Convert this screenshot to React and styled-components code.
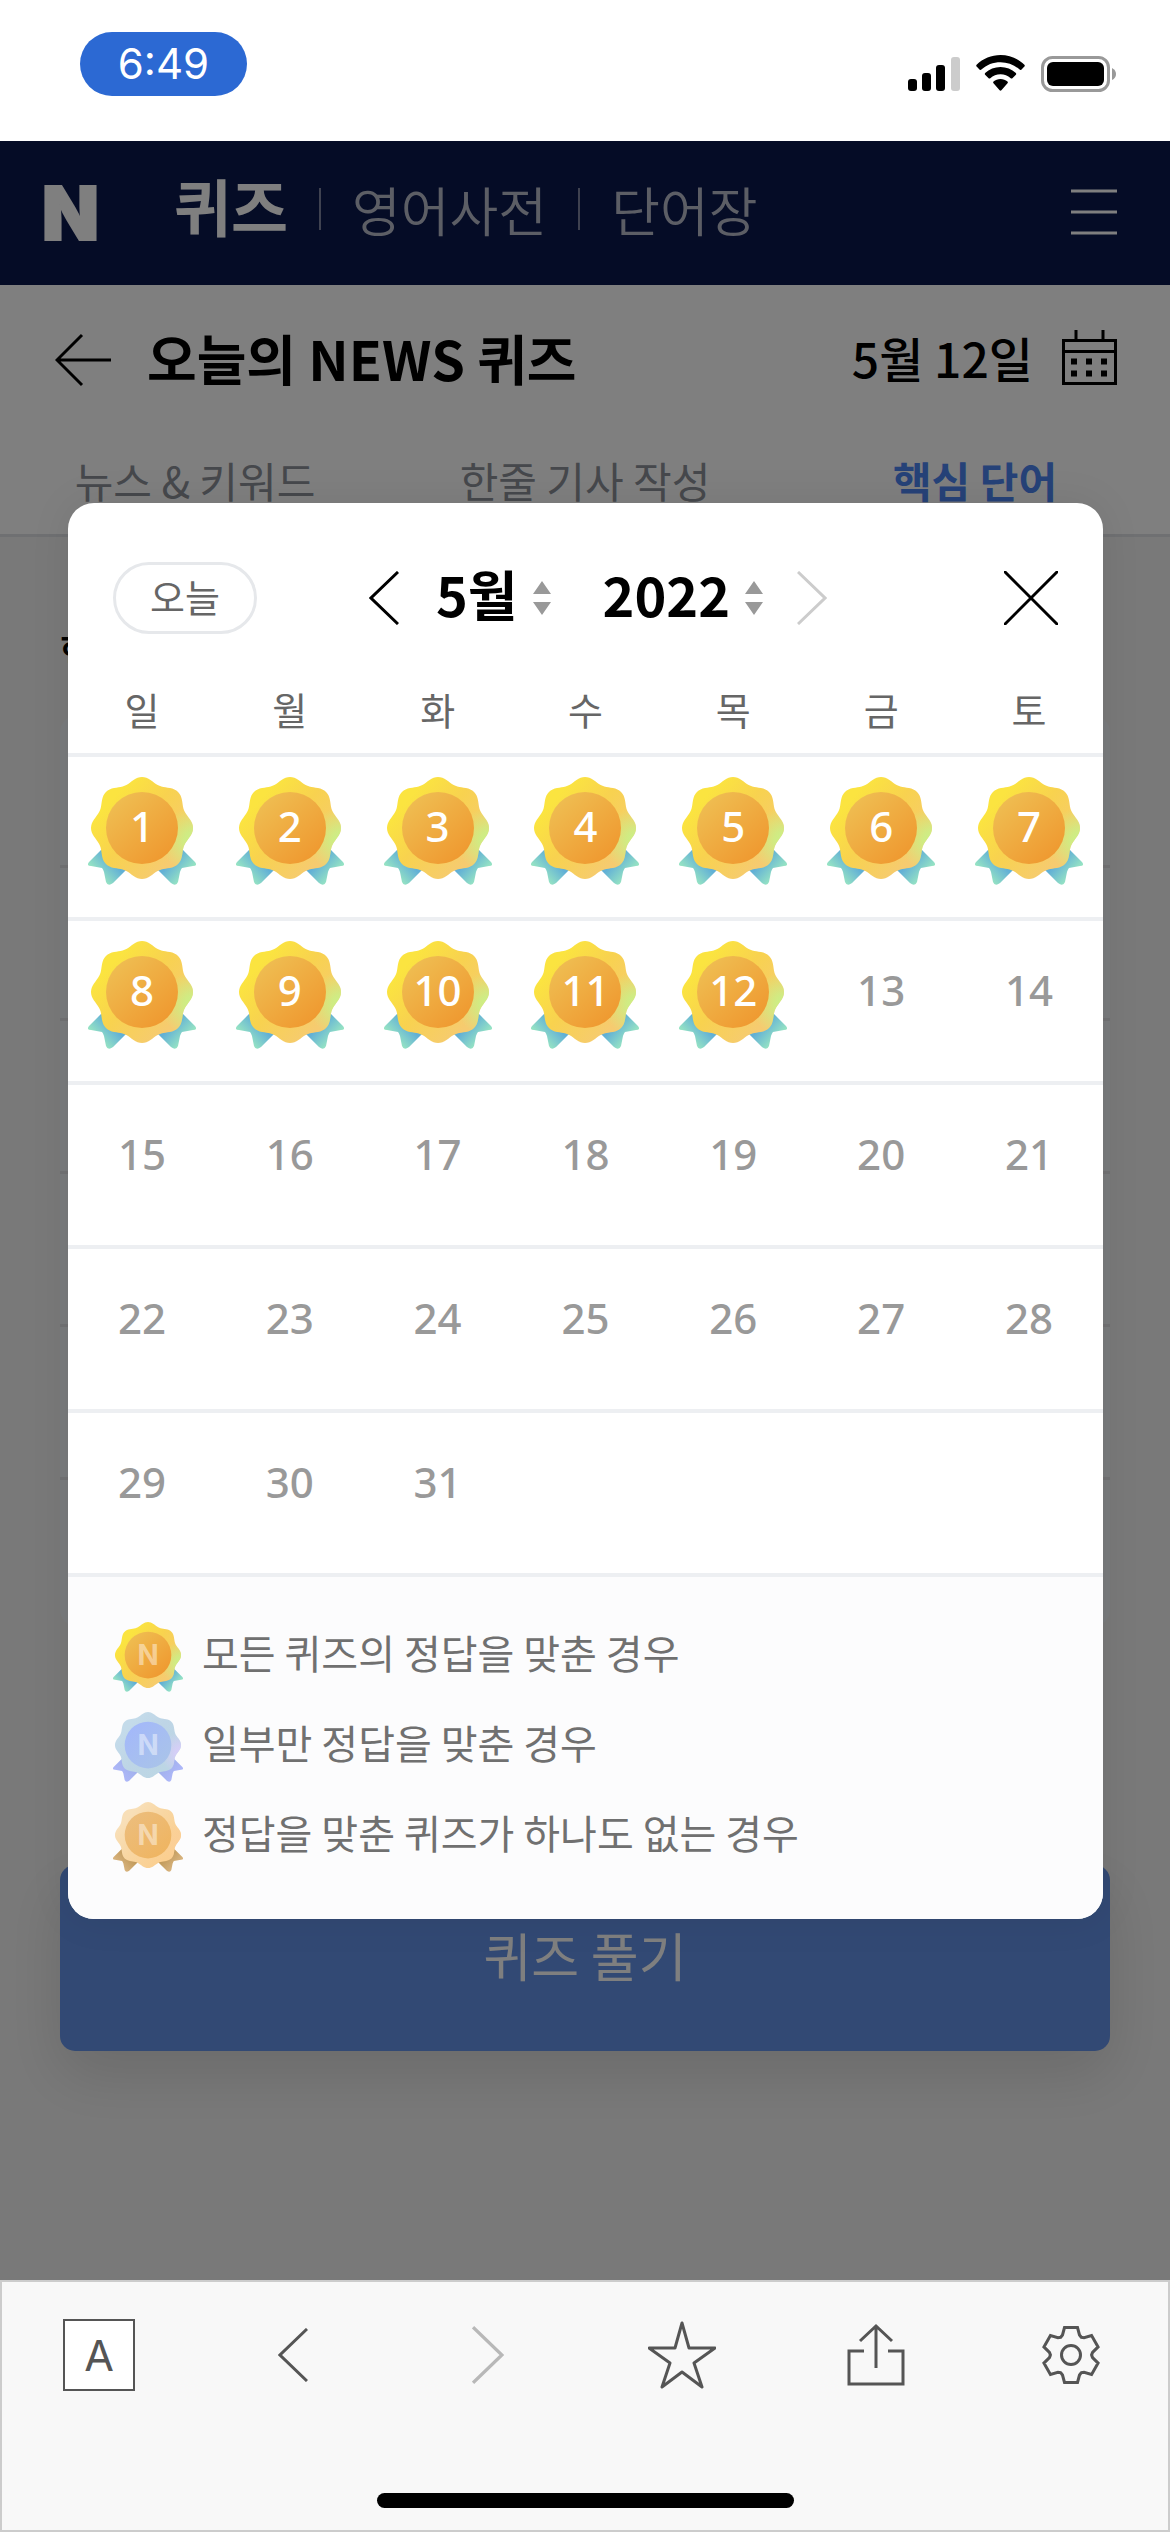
import React from 'react';
import styled, { createGlobalStyle } from 'styled-components';

const GlobalStyle = createGlobalStyle`
  *, *::before, *::after {
    box-sizing: border-box;
  }
  body {
    margin: 0;
    font-family: "Noto Sans CJK KR", "Noto Sans", sans-serif;
    color: #000;
    background: #fff;
  }
  button, select {
    font-family: inherit;
    color: inherit;
    background: none;
    border: 0;
    padding: 0;
    margin: 0;
  }
  a {
    color: inherit;
    text-decoration: none;
  }
  svg {
    display: block;
  }
`;

const Screen = styled.div`
  display: flex;
  flex-direction: column;
  min-height: 100vh;
`;

/* status bar */

const StatusBar = styled.div`
  display: flex;
  justify-content: space-between;
  align-items: flex-start;
  height: 141px;
  padding: 32px 54px 0 80px;
`;
const Time = styled.div`
  width: 167px;
  border-radius: 32px;
  background: #2c69d3;
  color: #fff;
  text-align: center;
  font: 400 42px/64px Inter, sans-serif;
`;
const StatusIcons = styled.div`
  display: flex;
  gap: 15px;
  padding-top: 23px;
`;

/* page under the dialog */

const Main = styled.main`
  position: relative;
  flex: 1;
  background: #f3f3f3;
`;
const TopNav = styled.header`
  display: flex;
  align-items: center;
  height: 144px;
  padding: 0 53px 0 42px;
  background: #0a184c;
  color: #fff;
`;
const Logo = styled.a`
  width: 132px;
  font: 900 74px/144px Inter, sans-serif;
  -webkit-text-stroke: 2px #fff;
`;
const NavLinks = styled.nav`
  display: flex;
  align-items: center;
  flex: 1;
`;
const NavLink = styled.a`
  display: flex;
  align-items: center;
  padding-bottom: ${({ $active }) => ($active ? 16 : 8)}px;
  color: ${({ $active }) => ($active ? '#fff' : '#b9bccb')};
  font-size: ${({ $active }) => ($active ? 62 : 53)}px;
  font-weight: ${({ $active }) => ($active ? 700 : 350)};
  line-height: 80px;

  &:not(:first-child)::before {
    content: "";
    width: 2px;
    height: 42px;
    margin: 0 31px;
    background: #7e84a0;
  }
`;
const TitleBar = styled.div`
  display: flex;
  align-items: center;
  height: 150px;
  padding: 0 53px 0 55px;
  background: #fff;
`;
const Title = styled.h1`
  flex: 1;
  margin: 0 0 4px 36px;
  font-size: 54px;
  font-weight: 700;
  line-height: 76px;
`;
const DateButton = styled.button`
  display: flex;
  align-items: center;
  gap: 29px;
  font-size: 48px;
  font-weight: 500;
  line-height: 72px;

  span {
    padding-bottom: 6px;
  }
`;
const Tabs = styled.nav`
  display: grid;
  grid-template-columns: repeat(3, 1fr);
  height: 102px;
  padding-top: 15px;
  background: #fff;
  border-bottom: 3px solid #dfe1e4;
`;
const Tab = styled.a`
  text-align: center;
  font-size: 42px;
  line-height: 60px;
  font-weight: ${({ $active }) => ($active ? 700 : 400)};
  color: ${({ $active }) => ($active ? '#4c84f0' : '#8c9098')};
`;
const Words = styled.section`
  padding: 91px 60px 0;
`;
const WordsTitle = styled.h2`
  margin: 0 0 43px;
  font-size: 42px;
  font-weight: 500;
  line-height: 44px;
`;
const WordList = styled.ul`
  list-style: none;
  margin: 0;
  padding: 0;
  border-radius: 18px;
  background: #f3f6fb;
`;
const Word = styled.li`
  height: 153px;
  border-bottom: 3px solid #e2e4e8;

  &:last-child {
    height: 147px;
    border-bottom: 0;
  }
`;
const StartButton = styled.button`
  width: 100%;
  height: 186px;
  margin-top: 238px;
  padding-bottom: 8px;
  border-radius: 15px;
  background: #6492e8;
  box-shadow: 0 24px 60px rgba(0, 0, 0, .12);
  color: #fff;
  font-size: 52px;
  font-weight: 400;
`;

/* calendar dialog */

const Overlay = styled.div`
  position: absolute;
  inset: 0;
  padding: 362px 67px 0 68px;
  background: rgba(0, 0, 0, .5);
`;
const Dialog = styled.div`
  overflow: hidden;
  border-radius: 26px;
  background: #fff;
  box-shadow: 0 0 40px rgba(0, 0, 0, .08);
`;
const DialogHead = styled.div`
  display: flex;
  align-items: center;
  justify-content: space-between;
  height: 132px;
  padding: 58px 45px 0;
`;
const TodayButton = styled.button`
  width: 144px;
  height: 72px;
  padding-bottom: 4px;
  border: 3px solid #e6e8eb;
  border-radius: 36px;
  color: #666;
  font-size: 38px;
  line-height: 50px;
`;
const Picker = styled.div`
  display: flex;
  align-items: center;
  flex: 1;
  padding-left: 112px;
`;
const Select = styled.label`
  display: flex;
  align-items: center;
  position: relative;
  margin-left: ${({ $first }) => ($first ? 37 : 52)}px;

  select {
    appearance: none;
    field-sizing: content;
    padding: 0 33px 8px 0;
    font-size: 54px;
    font-weight: 700;
    line-height: 72px;
  }
  svg {
    position: absolute;
    right: 0;
    pointer-events: none;
  }
`;
const NextButton = styled.button`
  margin-left: 34px;
`;
const Grid = styled.table`
  width: 100%;
  table-layout: fixed;
  border-spacing: 0;
`;
const Weekday = styled.th`
  padding: 50px 0 20px;
  border-bottom: 4px solid #edeff2;
  color: #666;
  font-size: 38px;
  font-weight: 400;
  line-height: 48px;
`;
const Cell = styled.td`
  height: 164px;
  padding: 20px 0 0;
  border-bottom: 4px solid #edeff2;
  vertical-align: top;
`;
const Day = styled.div`
  position: relative;
  width: 108px;
  height: 108px;
  margin: 0 auto;
  text-align: center;
  font: 500 42px/98px "Noto Sans", sans-serif;
  color: ${({ $done }) => ($done ? '#fff' : '#999')};

  svg {
    position: absolute;
    inset: 0;
  }
  span {
    position: relative;
  }
`;
const Legend = styled.ul`
  list-style: none;
  margin: 0;
  padding: 45px 45px 48px;
  display: grid;
  gap: 21px;
  background: #fcfcfd;
`;
const LegendItem = styled.li`
  display: flex;
  align-items: center;
  gap: 19px;
  height: 69px;
  color: #707070;
  font-size: 40px;
  line-height: 60px;

  span {
    padding-bottom: 10px;
  }
`;

/* browser toolbar */

const Toolbar = styled.footer`
  border: 2px solid #ccc;
  background: #f8f8f8;
  padding: 37px 0 22px;
`;
const Tools = styled.div`
  display: grid;
  grid-template-columns: repeat(6, 1fr);
  justify-items: center;
  align-items: center;
  height: 72px;
  color: #555;
`;
const TextTool = styled.button`
  width: 72px;
  height: 72px;
  border: 2px solid #555;
  background: #fff;
  font: 400 43px/68px Inter, sans-serif;
`;
const HomeBar = styled.div`
  width: 417px;
  height: 15px;
  margin: 102px auto 0;
  border-radius: 8px;
  background: #000;
`;

// eight soft lobes round (54, 51)
const badgePath = (() => {
  const points = [];
  for (let i = 0; i < 144; i += 1) {
    const t = (i / 144) * Math.PI * 2;
    const r = 48.3 + 2.7 * Math.cos(8 * t);
    points.push(`${(54 + r * Math.cos(t)).toFixed(2)} ${(51 + r * Math.sin(t)).toFixed(2)}`);
  }
  return `M${points.join('L')}Z`;
})();
const ribbonPath = 'M13 73L1 85Q-2 89 3 89L14 91Q15 92 16 95L18 105Q20 110 25 106L39 92L30 70Z';

const medals = {
  gold: {
    rim: ['#fbe440', '#f8d24f', '#f6cb70'], glow: '#c8f288', disc: ['#efbe52', '#ef9a31'], ribbon: ['#62b0d6', '#a0edc0'],
  },
  silver: {
    rim: ['#c4dbea', '#bed5e6', '#bcd6e4'], glow: '#d9cdfa', disc: ['#a3b8fa', '#a9c3ea'], ribbon: ['#a3b2ee', '#b0b8fb'],
  },
  bronze: {
    rim: ['#f8dfb8', '#f8d6a2', '#fbcf90'], glow: '#fbcf98', disc: ['#ecbd7c', '#efb562'], ribbon: ['#c39c5e', '#dcb885'],
  },
};

const DefsSvg = styled.svg`
  position: absolute;
`;

const MedalDefs = () => (
  <DefsSvg width="0" height="0" aria-hidden="true">
    <defs>
      {Object.entries(medals).map(([kind, m]) => (
        <React.Fragment key={kind}>
          <linearGradient id={`${kind}-rim`} x1="0.1" y1="0.2" x2="0.8" y2="0.8">
            <stop offset="0.1" stopColor={m.rim[0]} />
            <stop offset="0.5" stopColor={m.rim[1]} />
            <stop offset="1" stopColor={m.rim[2]} />
          </linearGradient>
          <radialGradient id={`${kind}-glow`} cx="1" cy="0.62" r="0.32">
            <stop offset="0" stopColor={m.glow} />
            <stop offset="0.3" stopColor={m.glow} stopOpacity="0.8" />
            <stop offset="1" stopColor={m.glow} stopOpacity="0" />
          </radialGradient>
          <linearGradient id={`${kind}-disc`} x1="0.1" y1="0.1" x2="0.8" y2="0.9">
            <stop offset="0" stopColor={m.disc[0]} />
            <stop offset="1" stopColor={m.disc[1]} />
          </linearGradient>
          <linearGradient id={`${kind}-ribbon`} x1="0.6" y1="0.35" x2="0.15" y2="0.75">
            <stop offset="0" stopColor={m.ribbon[0]} />
            <stop offset="1" stopColor={m.ribbon[1]} />
          </linearGradient>
        </React.Fragment>
      ))}
    </defs>
  </DefsSvg>
);

const Medal = ({ kind, size, letter }) => (
  <svg width={size} height={size} viewBox="0 0 108 108" aria-hidden="true">
    <path d={ribbonPath} fill={`url(#${kind}-ribbon)`} />
    <path d={ribbonPath} fill={`url(#${kind}-ribbon)`} transform="matrix(-1 0 0 1 108 0)" />
    <path d={badgePath} fill={`url(#${kind}-rim)`} />
    <path d={badgePath} fill={`url(#${kind}-glow)`} />
    <circle cx="54" cy="51" r="36" fill={`url(#${kind}-disc)`} />
    {letter && (
      <text x="54" y="67" textAnchor="middle" fontFamily="Inter" fontWeight="700" fontSize="43" fill="#fff" fillOpacity="0.45">N</text>
    )}
  </svg>
);

const Chevron = ({ right, color, width = 30, height = 54 }) => (
  <svg width={width} height={height} viewBox="0 0 30 54" fill="none" stroke={color} strokeWidth="3">
    <path d={right ? 'M1 1L28 27L1 53' : 'M29 1L2 27L29 53'} />
  </svg>
);

const Spinner = () => (
  <svg width="18" height="34" viewBox="0 0 18 34" fill="#999">
    <path d="M9 0L18 13H0ZM0 21H18L9 34Z" />
  </svg>
);

const weekdays = ['일', '월', '화', '수', '목', '금', '토'];
const months = Array.from({ length: 12 }, (_, i) => `${i + 1}월`);
const years = ['2022', '2021', '2020'];
const weeks = [0, 1, 2, 3, 4].map(w => weekdays.map((_, d) => w * 7 + d + 1));
const today = 12;
const lastDay = 31;

const legend = [
  { kind: 'gold', text: '모든 퀴즈의 정답을 맞춘 경우' },
  { kind: 'silver', text: '일부만 정답을 맞춘 경우' },
  { kind: 'bronze', text: '정답을 맞춘 퀴즈가 하나도 없는 경우' },
];

// six teeth round (30, 30)
const gearPath = (() => {
  const points = [];
  for (let i = 0; i < 6; i += 1) {
    const a = (i * Math.PI) / 3;
    [[-10.500, 17.500], [-8.500, 20], [-6.500, 27.500], [6.500, 27.500], [8.500, 20], [10.500, 17.500]].forEach(([x, y]) => {
      points.push(`${(30 + x * Math.cos(a) + y * Math.sin(a)).toFixed(2)} ${(30 + x * Math.sin(a) - y * Math.cos(a)).toFixed(2)}`);
    });
  }
  return `M${points.join('L')}Z`;
})();

const StatusArea = () => (
  <StatusBar>
    <Time>6:49</Time>
    <StatusIcons>
      <svg width="53" height="37" viewBox="0 0 53 37">
        <rect x="0" y="24" width="9" height="12" rx="3" />
        <rect x="14" y="18" width="9" height="18" rx="3" />
        <rect x="28" y="10" width="9" height="26" rx="3" />
        <rect x="43" y="2" width="9" height="34" rx="3" fill="#ccc" />
      </svg>
      <svg width="49" height="37" viewBox="0 0 49 37">
        <path d="M24.500 0C15.500 0 7 3.500.6 9.800Q-.2 10.700.6 11.600L3.700 14.700Q4.500 15.400 5.400 14.600C10.500 9.700 17.300 7.200 24.500 7.200S38.500 9.700 43.600 14.600Q44.500 15.400 45.300 14.700L48.400 11.600Q49.200 10.700 48.400 9.800C42 3.500 33.500 0 24.500 0Z" />
        <path d="M24.500 12C18.700 12 13.300 14.200 9.100 18Q8.300 18.900 9.100 19.800L12.600 23.200Q13.400 24 14.300 23.200C17.100 20.700 20.700 19.300 24.500 19.300S31.900 20.700 34.700 23.200Q35.600 24 36.400 23.200L39.900 19.800Q40.700 18.900 39.900 18C35.700 14.200 30.300 12 24.500 12Z" />
        <path d="M24.500 24C21.800 24 19.400 24.900 17.500 26.500Q16.600 27.400 17.500 28.300L23.600 35.300Q24.500 36.200 25.400 35.300L31.500 28.300Q32.400 27.400 31.500 26.500C29.600 24.900 27.200 24 24.500 24Z" />
      </svg>
      <svg width="76" height="38" viewBox="0 0 76 38">
        <rect x="2.500" y="2.500" width="66" height="33" rx="10" fill="none" stroke="#999" strokeWidth="3" />
        <rect x="7" y="7" width="57" height="24" rx="6" />
        <path d="M72 13Q76 15 76 19T72 25Z" fill="#999" />
      </svg>
    </StatusIcons>
  </StatusBar>
);

const Calendar = () => (
  <Dialog role="dialog" aria-modal="true">
    <DialogHead>
      <TodayButton>오늘</TodayButton>
      <Picker>
        <button aria-label="이전 달"><Chevron color="#000" /></button>
        <Select $first>
          <select aria-label="월" defaultValue="5월">
            {months.map(m => <option key={m}>{m}</option>)}
          </select>
          <Spinner />
        </Select>
        <Select>
          <select aria-label="연도" defaultValue="2022">
            {years.map(y => <option key={y}>{y}</option>)}
          </select>
          <Spinner />
        </Select>
        <NextButton aria-label="다음 달" disabled><Chevron right color="#ccc" /></NextButton>
      </Picker>
      <button aria-label="닫기">
        <svg width="54" height="54" viewBox="0 0 54 54" stroke="#000" strokeWidth="3">
          <path d="M0 0L54 54M54 0L0 54" />
        </svg>
      </button>
    </DialogHead>
    <Grid>
      <thead>
        <tr>{weekdays.map(d => <Weekday key={d} scope="col">{d}</Weekday>)}</tr>
      </thead>
      <tbody>
        {weeks.map(week => (
          <tr key={week[0]}>
            {week.map(day => (
              <Cell key={day}>
                {day <= lastDay && (
                  <Day $done={day <= today}>
                    {day <= today && <Medal kind="gold" size={108} />}
                    <span>{day}</span>
                  </Day>
                )}
              </Cell>
            ))}
          </tr>
        ))}
      </tbody>
    </Grid>
    <Legend>
      {legend.map(({ kind, text }) => (
        <LegendItem key={kind}>
          <Medal kind={kind} size={70} letter />
          <span>{text}</span>
        </LegendItem>
      ))}
    </Legend>
  </Dialog>
);

const App = () => (
  <Screen>
    <GlobalStyle />
    <MedalDefs />
    <StatusArea />
    <Main>
      <TopNav>
        <Logo href="#">N</Logo>
        <NavLinks>
          <NavLink href="#quiz" $active>퀴즈</NavLink>
          <NavLink href="#dict">영어사전</NavLink>
          <NavLink href="#words">단어장</NavLink>
        </NavLinks>
        <button aria-label="메뉴">
          <svg width="46" height="48" viewBox="0 0 46 48" stroke="#fff" strokeWidth="3">
            <path d="M0 2H46M0 23H46M0 44H46" />
          </svg>
        </button>
      </TopNav>
      <TitleBar>
        <button aria-label="뒤로">
          <svg width="56" height="54" viewBox="0 0 56 54" fill="none" stroke="#000" strokeWidth="3">
            <path d="M56 27H2M27 2L2 27L27 52" />
          </svg>
        </button>
        <Title>오늘의 NEWS 퀴즈</Title>
        <DateButton>
          <span>5월 12일</span>
          <svg width="55" height="60" viewBox="0 0 55 60" fill="none" stroke="#000" strokeWidth="3">
            <path d="M1.500 10.500H53.500V53.500H1.500ZM1.500 21.500H53.500M14 0V10M41 0V10" />
            <path d="M9 31.500H46M9 43.500H46" strokeWidth="6" strokeDasharray="6 9" />
          </svg>
        </DateButton>
      </TitleBar>
      <Tabs>
        <Tab href="#news">뉴스 &amp; 키워드</Tab>
        <Tab href="#writing">한줄 기사 작성</Tab>
        <Tab href="#core" $active>핵심 단어</Tab>
      </Tabs>
      <Words>
        <WordsTitle>핵심 단어</WordsTitle>
        <WordList>
          {[1, 2, 3, 4, 5, 6].map(n => <Word key={n} />)}
        </WordList>
        <StartButton>퀴즈 풀기</StartButton>
      </Words>
      <Overlay>
        <Calendar />
      </Overlay>
    </Main>
    <Toolbar>
      <Tools>
        <TextTool aria-label="글자 크기">A</TextTool>
        <button aria-label="이전"><Chevron color="#555" /></button>
        <button aria-label="다음"><Chevron right color="#b8b8b8" width={32} height={58} /></button>
        <button aria-label="즐겨찾기">
          <svg width="68" height="68" viewBox="0 0 68 68" fill="none" stroke="#555" strokeWidth="3" strokeLinejoin="round">
            <path d="M34 2L41 27H67L46 42L54 66L34 51L14 66L22 42L1 27H27Z" />
          </svg>
        </button>
        <button aria-label="공유">
          <svg width="60" height="64" viewBox="0 0 60 64" fill="none" stroke="#555" strokeWidth="3">
            <path d="M18 28H3V61H57V28H42M30 45V3M14 18L30 3L46 18" />
          </svg>
        </button>
        <button aria-label="설정">
          <svg width="60" height="60" viewBox="0 0 60 60" fill="none" stroke="#555" strokeWidth="3">
            <path d={gearPath} />
            <circle cx="30" cy="30" r="9.500" />
          </svg>
        </button>
      </Tools>
      <HomeBar />
    </Toolbar>
  </Screen>
);

export default App;
